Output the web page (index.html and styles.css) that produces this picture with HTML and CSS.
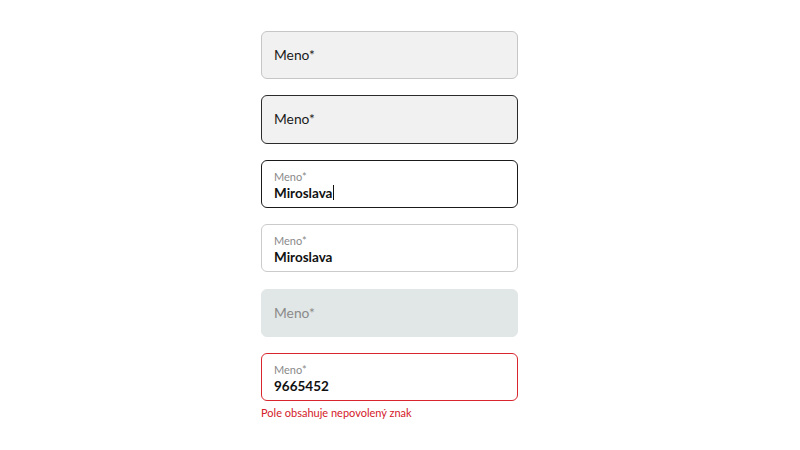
FILE: index.html
```html
<!DOCTYPE html>
<html lang="sk">
<head>
<meta charset="utf-8">
<title>Meno</title>
<link rel="stylesheet" href="styles.css">
</head>
<body>
<div class="stack">
  <div class="field field-default"><span class="placeholder">Meno*</span></div>
  <div class="field field-hover"><span class="placeholder">Meno*</span></div>
  <div class="field field-focus filled"><span class="label">Meno*</span><span class="value">Miroslava<span class="caret"></span></span></div>
  <div class="field field-filled filled"><span class="label">Meno*</span><span class="value">Miroslava</span></div>
  <div class="field field-disabled"><span class="placeholder">Meno*</span></div>
  <div class="group">
    <div class="field field-error filled"><span class="label">Meno*</span><span class="value">9665452</span></div>
    <div class="error-text">Pole obsahuje nepovolený znak</div>
  </div>
</div>
</body>
</html>
```
FILE: styles.css
```css
html, body {
  margin: 0;
  padding: 0;
  background: #ffffff;
  font-family: "Lato", "Noto Sans", sans-serif;
}
.stack {
  width: 257px;
  margin-left: 261px;
  padding-top: 31px;
  display: flex;
  flex-direction: column;
  gap: 16.2px;
}
.field {
  box-sizing: border-box;
  height: 48.2px;
  border: 1px solid #c9c9c9;
  border-radius: 6px;
  padding: 0 12px;
  display: flex;
  flex-direction: column;
  justify-content: center;
  background: #ffffff;
}
.field.filled {
  justify-content: flex-start;
  padding-top: 10px;
  gap: 2px;
}
.placeholder {
  font-size: 13.8px;
  color: #1a1a1a;
  line-height: 18px;
}
.label {
  font-size: 11px;
  line-height: 12px;
  color: #8a8a8a;
}
.value {
  font-size: 13.5px;
  line-height: 16px;
  font-weight: 700;
  color: #111111;
  display: flex;
  align-items: center;
}
.caret {
  display: inline-block;
  width: 1px;
  height: 15px;
  background: #111111;
  margin-left: 1px;
}
.field-default {
  background: #f1f1f1;
  border-color: #c6c6c6;
}
.field-hover {
  background: #f1f1f1;
  border-color: #2b2b2b;
}
.field-focus {
  border-color: #1a1a1a;
}
.field-filled {
  border-color: #cbcbcb;
}
.field-disabled {
  background: #e1e6e6;
  border-color: #e1e6e6;
}
.field-disabled .placeholder {
  color: #8a8a8a;
}
.field-error {
  border-color: #d9262e;
}
.group {
  display: flex;
  flex-direction: column;
  gap: 5px;
}
.error-text {
  font-size: 11px;
  line-height: 14px;
  color: #d42029;
}
```
